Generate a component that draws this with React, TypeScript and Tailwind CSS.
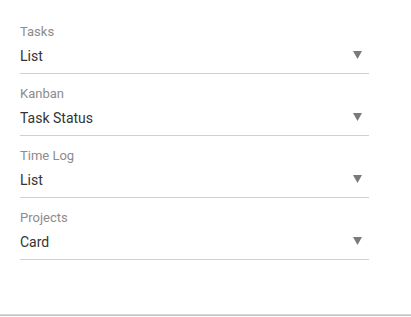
import React from "react";

const fields = [
  { label: "Tasks", value: "List" },
  { label: "Kanban", value: "Task Status" },
  { label: "Time Log", value: "List" },
  { label: "Projects", value: "Card" },
];

function Arrow() {
  return (
    <svg width="9" height="8" viewBox="0 0 9 8" className="block mb-[2px]">
      <polygon points="0,0 9,0 4.5,8" fill="#7a7a7a" />
    </svg>
  );
}

export default function App() {
  return (
    <div
      className="w-[411px] h-[317px] bg-white flex flex-col overflow-hidden"
      style={{ fontFamily: "Roboto, 'Liberation Sans', sans-serif" }}
    >
      <div className="flex-1 pt-[24px] pl-[20px]">
        <div className="w-[349px] flex flex-col gap-[12px]">
          {fields.map((f) => (
            <div key={f.label} className="border-b border-[#d0d0d0] pb-[7px]">
              <div className="text-[13px] leading-[16px] text-[#8c8c8c]">{f.label}</div>
              <div className="mt-[6px] flex items-center justify-between pr-[7px]">
                <span className="text-[14px] leading-[20px] text-[#333333]">{f.value}</span>
                <Arrow />
              </div>
            </div>
          ))}
        </div>
      </div>
      <div className="h-[1px] bg-[#dadada]" />
      <div className="h-[1px] bg-[#c2c2c2]" />
      <div className="h-[1px] bg-white" />
    </div>
  );
}
